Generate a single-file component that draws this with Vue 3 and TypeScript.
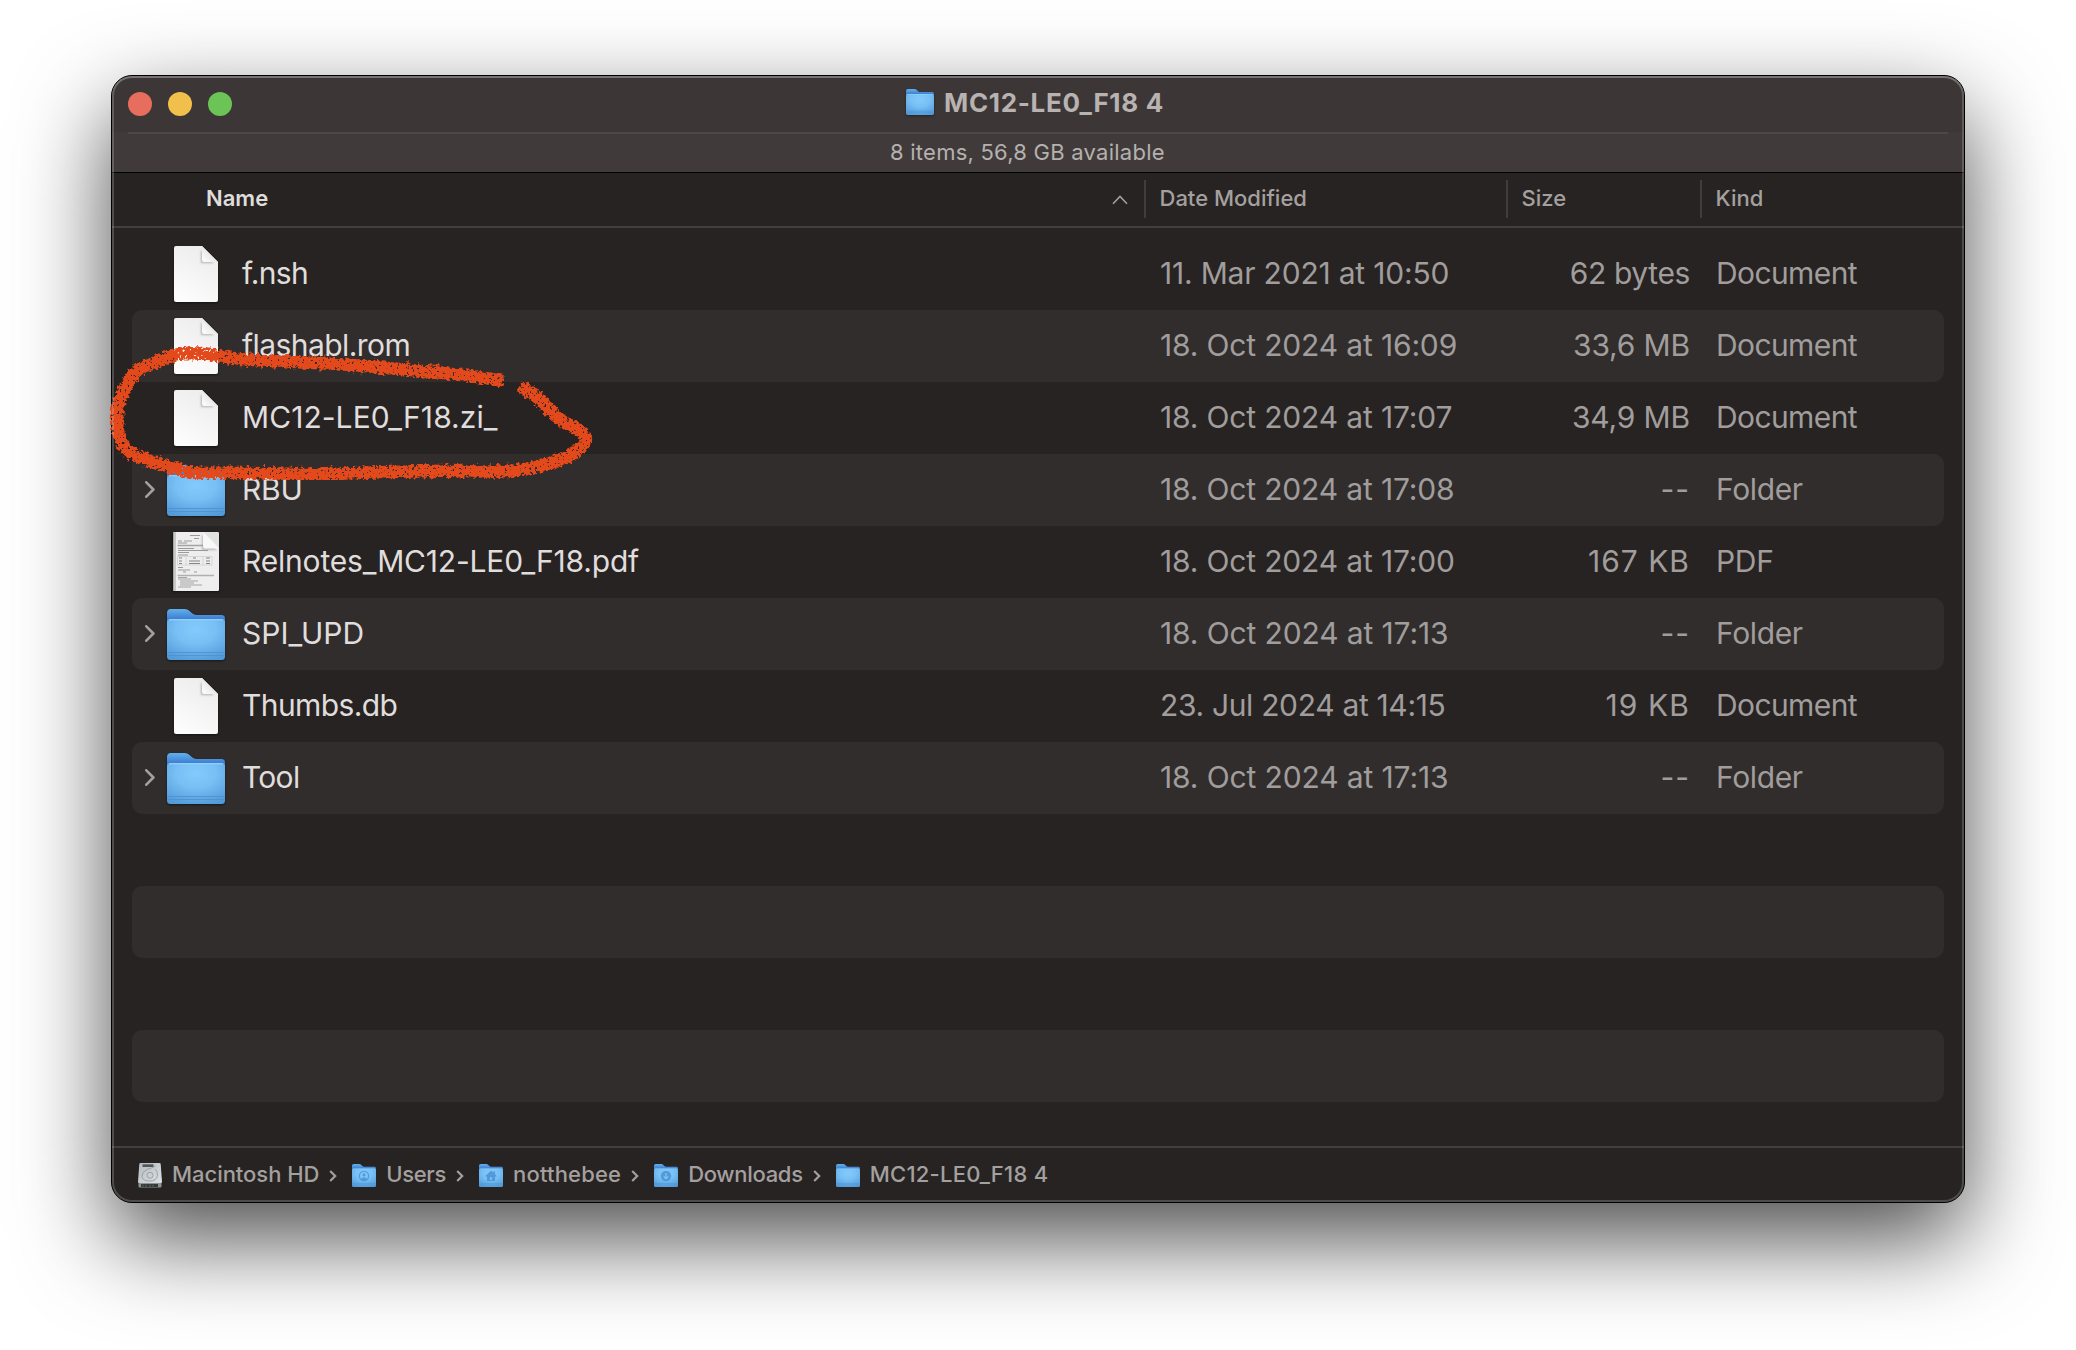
<script setup lang="ts">
type FileKind = 'doc' | 'pdf' | 'folder'

interface Cell {
  text: string
  tracking: number
}

interface FileRow {
  icon: FileKind
  name: Cell
  date: Cell
  size: Cell
  kind: Cell
}

interface Crumb {
  icon: 'disk' | 'folder'
  badge?: 'user' | 'home' | 'download'
  label: Cell
}

const cell = (text: string, tracking: number): Cell => ({ text, tracking })

const documentKind = cell('Document', -0.6)
const folderKind = cell('Folder', -0.36)
const noSize = cell('--', 1)

const files: FileRow[] = [
  { icon: 'doc', name: cell('f.nsh', -0.65), date: cell('11. Mar 2021 at 10:50', -0.2), size: cell('62 bytes', -0.38), kind: documentKind },
  { icon: 'doc', name: cell('flashabl.rom', -0.56), date: cell('18. Oct 2024 at 16:09', -0.16), size: cell('33,6 MB', -0.15), kind: documentKind },
  { icon: 'doc', name: cell('MC12-LE0_F18.zi_', 0.06), date: cell('18. Oct 2024 at 17:07', -0.16), size: cell('34,9 MB', -0.15), kind: documentKind },
  { icon: 'folder', name: cell('RBU', -0.2), date: cell('18. Oct 2024 at 17:08', -0.16), size: noSize, kind: folderKind },
  { icon: 'pdf', name: cell('Relnotes_MC12-LE0_F18.pdf', -0.19), date: cell('18. Oct 2024 at 17:00', -0.16), size: cell('167 KB', 1), kind: cell('PDF', -0.3) },
  { icon: 'folder', name: cell('SPI_UPD', 0), date: cell('18. Oct 2024 at 17:13', -0.12), size: noSize, kind: folderKind },
  { icon: 'doc', name: cell('Thumbs.db', -0.6), date: cell('23. Jul 2024 at 14:15', -0.33), size: cell('19 KB', 1.1), kind: documentKind },
  { icon: 'folder', name: cell('Tool', -0.7), date: cell('18. Oct 2024 at 17:13', -0.12), size: noSize, kind: folderKind },
]

const emptyRows = 4

const crumbs: Crumb[] = [
  { icon: 'disk', label: cell('Macintosh HD', -0.04) },
  { icon: 'folder', badge: 'user', label: cell('Users', -0.35) },
  { icon: 'folder', badge: 'home', label: cell('notthebee', 0.18) },
  { icon: 'folder', badge: 'download', label: cell('Downloads', -0.3) },
  { icon: 'folder', label: cell('MC12-LE0_F18 4', 0.25) },
]

const track = (c: Cell) => ({ letterSpacing: `${c.tracking}px` })
</script>

<template>
  <div class="desktop">
    <svg class="defs" width="0" height="0" aria-hidden="true">
      <defs>
        <linearGradient id="folder-back" x1="0" y1="0" x2="0" y2="1">
          <stop offset="0" stop-color="#62b0ea" />
          <stop offset="0.4" stop-color="#3f80d2" />
          <stop offset="1" stop-color="#3f80d2" />
        </linearGradient>
        <radialGradient id="folder-front" cx="0.5" cy="0.25" r="0.85">
          <stop offset="0" stop-color="#84cafb" />
          <stop offset="0.4" stop-color="#78c0f5" />
          <stop offset="0.95" stop-color="#529bd9" />
        </radialGradient>
        <linearGradient id="doc-body" x1="0.2" y1="1" x2="0.7" y2="0">
          <stop offset="0" stop-color="#fdfdfd" />
          <stop offset="1" stop-color="#ececec" />
        </linearGradient>
        <linearGradient id="doc-fold" x1="0" y1="1" x2="0.6" y2="0.4">
          <stop offset="0" stop-color="#ffffff" />
          <stop offset="1" stop-color="#e4e4e4" />
        </linearGradient>
        <linearGradient id="disk-top" x1="0" y1="0" x2="1" y2="1">
          <stop offset="0" stop-color="#b3babe" />
          <stop offset="1" stop-color="#dce1e4" />
        </linearGradient>
        <filter id="soft" x="-50%" y="-50%" width="200%" height="200%">
          <feGaussianBlur stdDeviation="1.3" />
        </filter>
        <filter id="crayon" filterUnits="userSpaceOnUse" x="0" y="0" width="520" height="160">
          <feTurbulence type="fractalNoise" baseFrequency="0.3" numOctaves="2" seed="7" result="noise" />
          <feDisplacementMap in="SourceGraphic" in2="noise" scale="8" xChannelSelector="R" yChannelSelector="G" result="rough" />
          <feTurbulence type="fractalNoise" baseFrequency="0.4" numOctaves="2" seed="3" result="grain" />
          <feColorMatrix in="grain" type="matrix" values="0 0 0 0 0  0 0 0 0 0  0 0 0 0 0  0 0 0 -14 10.2" result="holes" />
          <feComposite in="rough" in2="holes" operator="in" />
        </filter>
      </defs>
      <symbol id="folder" viewBox="0 0 58 51" preserveAspectRatio="none">
        <path d="M0 4Q0 0 4 0H17.5Q20.5 0 22.5 2L25 4.3Q27 6 29.500 6H54.500Q58 6 58 9.500V24H0Z" fill="url(#folder-back)" />
        <rect x="0" y="10" width="58" height="41" rx="3.500" fill="url(#folder-front)" />
        <path d="M2 10.800H56" stroke="#9bd8ff" stroke-width="1" />
        <path d="M0.500 43.500H57.500M0.500 46.500H57.500" stroke="#4a8fcf" stroke-width="1.200" opacity="0.75" />
      </symbol>
      <symbol id="doc" viewBox="0 0 44 56">
        <path d="M2 0H28L44 16V54Q44 56 42 56H2Q0 56 0 54V2Q0 0 2 0Z" fill="url(#doc-body)" />
        <path d="M27 4V17H40Z" fill="#8a8a8a" opacity="0.6" filter="url(#soft)" />
        <path d="M28 0V14Q28 16 30 16H44Z" fill="url(#doc-fold)" />
      </symbol>
      <symbol id="pdf" viewBox="0 0 47 59">
        <path d="M0 1H2V59H0Z" fill="#1a1818" />
        <path d="M1.500 0H45.500Q47 0 47 1.500V57.500Q47 59 45.500 59H1.500Z" fill="#eeeeee" />
        <path d="M1.500 0H4V59H1.500Z" fill="#c9c9c9" />
        <g stroke="#858585" fill="none">
          <path d="M18 3.500H28M22 6.500H27M6 9H10M12 9H20M6 11H15" stroke-width="0.800" />
          <path d="M5.500 13.500H42" stroke="#a4a4a4" stroke-width="1.600" />
          <path d="M6 16.500H22M6 18.500H36M6 20.500H17M6 23H16" stroke-width="0.800" />
          <path d="M7 26H10M21 26H24M34 26H38M7 29H10M17 29H28M34 29H38M7 31.500H10M17 31.500H28M34 31.500H38" stroke-width="1" />
          <path d="M5.500 24.500H40V33H5.500ZM14 24.500V33M31 24.500V33" stroke="#c8c8c8" stroke-width="0.600" />
          <path d="M6 35.500H11M6 38H18M11 40H14M22 40H25" stroke-width="0.800" />
          <path d="M5.500 43.500H42" stroke="#b0b0b0" stroke-width="1.500" />
          <path d="M6 45.500H15M6 47H19M8 49H26M8 51H22M8 53H30M6 55H19" stroke-width="0.700" />
        </g>
        <path d="M30 2V18H45Z" fill="#8d8d8d" opacity="0.55" filter="url(#soft)" />
        <path d="M31 0V14Q31 16.500 33 16.500H47Z" fill="#f8f8f8" />
        <path d="M31 0H45.500Q47 0 47 1.500V16.500Q39 6 31 0Z" fill="#e2e2e2" />
      </symbol>
      <symbol id="disk" viewBox="0 0 24 25">
        <path d="M0.500 19.500H23.500V23.300Q23.500 24.500 22.300 24.500H1.700Q0.500 24.500 0.500 23.300Z" fill="#8c9192" />
        <path d="M3 21H20V24H3Z" fill="#333838" />
        <path d="M5 21.500V24M8 21.500V24M12 21.500V24M15 21.500V24" stroke="#6a7071" stroke-width="0.700" />
        <path d="M2.600 0H21.400Q22.600 0 22.700 1L24 18.800Q24 20 22.800 20H1.200Q0 20 0 18.800L1.300 1Q1.500 0 2.600 0Z" fill="url(#disk-top)" />
        <path d="M4.500 1.300H15.500V4H4.500Z" fill="#50585c" />
        <path d="M17.500 3Q14 5 9 6.500Q3.500 9 4 13.500Q5 18 11 18Q19 18.500 19.500 12Q19.500 7.500 17 6" fill="none" stroke="#8f979b" stroke-width="0.800" />
        <circle cx="12" cy="12.300" r="3" fill="#c9d0d3" stroke="#8f979b" stroke-width="0.800" />
      </symbol>
    </svg>

    <main class="window">
      <header class="titlebar">
        <div class="lights">
          <span class="light close"></span>
          <span class="light minimise"></span>
          <span class="light zoom"></span>
        </div>
        <svg class="title-icon"><use href="#folder" /></svg>
        <h1 class="title">MC12-LE0_F18 4</h1>
      </header>
      <div class="statusbar"><span>8 items, 56,8 GB available</span></div>

      <div class="columns">
        <div class="col col-name">
          <span>Name</span>
          <svg class="caret" width="16" height="10" viewBox="0 0 16 10">
            <path d="M1 8.800L8 1.500L15 8.800" fill="none" stroke="#a3a09f" stroke-width="1.600" />
          </svg>
        </div>
        <div class="col col-date"><span>Date Modified</span></div>
        <div class="col col-size"><span>Size</span></div>
        <div class="col col-kind"><span>Kind</span></div>
      </div>

      <section class="list">
        <div v-for="file in files" :key="file.name.text" class="row">
          <div class="lead">
            <svg v-if="file.icon === 'folder'" class="disclosure" viewBox="0 0 10 17">
              <path d="M1.300 1.300L8.400 8.500L1.300 15.700" />
            </svg>
            <svg :class="['file-icon', file.icon]"><use :href="`#${file.icon}`" /></svg>
          </div>
          <span class="name" :style="track(file.name)">{{ file.name.text }}</span>
          <span class="meta" :style="track(file.date)">{{ file.date.text }}</span>
          <span class="meta size" :style="track(file.size)">{{ file.size.text }}</span>
          <span class="meta kind" :style="track(file.kind)">{{ file.kind.text }}</span>
        </div>
        <div v-for="n in emptyRows" :key="`empty-${n}`" class="row"></div>
      </section>

      <footer class="pathbar">
        <div v-for="(crumb, i) in crumbs" :key="crumb.label.text" class="crumb">
          <span class="crumb-icon">
            <svg :class="['crumb-glyph', crumb.icon]"><use :href="`#${crumb.icon}`" /></svg>
            <svg v-if="crumb.badge" class="badge" viewBox="0 0 12 12">
              <template v-if="crumb.badge === 'user'">
                <circle cx="6" cy="6" r="4.600" fill="none" stroke="#4790d2" stroke-width="1.300" />
                <circle cx="6" cy="4.800" r="1.600" fill="#4790d2" />
                <path d="M2.800 9Q6 5.500 9.200 9Q6 11.500 2.800 9Z" fill="#4790d2" />
              </template>
              <path
                v-else-if="crumb.badge === 'home'"
                fill-rule="evenodd"
                d="M6 0.500L8.500 2.800V1.300H10V4.200L11.700 6L10.800 7L10 6.300V11H2V6.300L1.200 7L0.300 6ZM4.900 10V7.200H7.100V10Z"
                fill="#4790d2"
              />
              <template v-else>
                <circle cx="6" cy="6" r="5.200" fill="#4790d2" />
                <path d="M6 3V8.500M3.800 6.500L6 8.700L8.200 6.500" fill="none" stroke="#84c7f8" stroke-width="1.100" />
              </template>
            </svg>
          </span>
          <span class="crumb-label" :style="track(crumb.label)">{{ crumb.label.text }}</span>
          <svg v-if="i < crumbs.length - 1" class="crumb-sep" viewBox="0 0 8 12">
            <path d="M1.200 1L6.200 6L1.200 11" />
          </svg>
        </div>
      </footer>

      <svg class="scribble" viewBox="0 0 520 160">
        <g filter="url(#crayon)" fill="none" stroke="#e4491b" stroke-width="12.500" stroke-linejoin="round">
          <path
            d="M403 61C380 57 355 54 333 52C300 49 270 46 233 44C200 42 165 41 140 39C125 37 110 34 87 33C72 33 66 40 52 44C38 47 33 54 28 63C22 74 17 82 17 100C17 112 20 122 26 129C34 137 48 140 60 144C75 149 85 152 100 153C150 152 200 155 233 154C270 153 300 151 333 151C365 150 400 154 425 149C445 145 462 141 474 133C482 127 486 123 486 119C486 112 475 109 465 103C455 96 447 87 438 78C430 71 426 70 420 67"
          />
        </g>
      </svg>
    </main>
  </div>
</template>

<style>
body {
  background: #ffffff;
}
</style>

<style scoped>
.desktop {
  box-sizing: border-box;
  width: 2076px;
  height: 1350px;
  padding: 75px 111px 0;
  overflow: hidden;
  background: #ffffff;
  font-family: Inter, 'Liberation Sans', sans-serif;
}

.defs {
  position: absolute;
}

.window {
  position: relative;
  box-sizing: border-box;
  width: 1854px;
  height: 1128px;
  display: flex;
  flex-direction: column;
  border: 1px solid #000000;
  border-radius: 21px;
  background: #272322;
  box-shadow: 0 36px 92px rgba(0, 0, 0, 0.7);
}

/* light rim just inside the black outline */
.window::after {
  content: '';
  position: absolute;
  inset: 0;
  border-radius: 20px;
  box-shadow: inset 0 0 0 2px rgba(255, 255, 255, 0.19), inset 0 2px 0 rgba(255, 255, 255, 0.14);
  pointer-events: none;
}

.titlebar {
  position: relative;
  box-sizing: border-box;
  height: 56px;
  flex: none;
  display: flex;
  align-items: center;
  padding-left: 16px;
  border-radius: 20px 20px 0 0;
  background: #3c3736;
}

.lights {
  display: flex;
  gap: 16px;
}

.light {
  width: 24px;
  height: 24px;
  border-radius: 50%;
}

.close {
  background: #e76e5d;
}

.minimise {
  background: #f1bf4c;
}

.zoom {
  background: #6bc455;
}

.title-icon {
  width: 28px;
  height: 26px;
  margin: 0 0 4px 674px;
  filter: drop-shadow(0 1px 1px rgba(0, 0, 0, 0.35));
}

.title {
  margin: 0 0 3px 10px;
  color: #b8b3b1;
  font-size: 26px;
  font-weight: 700;
  line-height: 32px;
  letter-spacing: 0.68px;
}

.statusbar {
  flex: none;
  height: 38px;
  padding: 2px 0 0 778px;
  border-bottom: 1px solid #000000;
  background: linear-gradient(#4c4846, #4c4846) 16px 0 / 1820px 2px no-repeat #403b3a;
  color: #b5b1af;
  font-size: 22px;
  line-height: 36px;
  letter-spacing: 0.24px;
}

.columns {
  flex: none;
  display: flex;
  height: 53px;
  border-bottom: 2px solid #423e3d;
  color: #a3a09f;
  font-size: 22px;
  font-weight: 500;
  line-height: 50px;
}

.col {
  display: flex;
  box-sizing: border-box;
}

.col + .col {
  padding-left: 15.5px;
  background: linear-gradient(#413d3c, #413d3c) 0 7px / 2px 38px no-repeat;
}

.col-name {
  width: 1032px;
  padding: 0 16px 0 94px;
  justify-content: space-between;
  color: #dfdddc;
  font-weight: 600;
}

.caret {
  margin-top: 22px;
}

.col-date {
  width: 362px;
}

.col-size {
  width: 194px;
}

.list {
  flex: 1;
  padding: 10px 20px 0 20px;
  overflow: hidden;
}

.row {
  display: grid;
  grid-template-columns: 110px 918px 362px 168px 1fr;
  height: 72px;
  border-radius: 10px;
  line-height: 71px;
  font-size: 30px;
  font-weight: 440;
  white-space: nowrap;
}

.row:nth-child(even) {
  background: #312d2c;
}

.lead {
  display: flex;
  justify-content: flex-end;
}

.disclosure {
  width: 10px;
  height: 17px;
  margin: 27px auto 0 13px;
  fill: none;
  stroke: #a3a09f;
  stroke-width: 2.6px;
  stroke-linecap: round;
  stroke-linejoin: round;
}

.file-icon {
  flex: none;
  filter: drop-shadow(0 1px 1px rgba(0, 0, 0, 0.5));
}

.file-icon.folder {
  width: 58px;
  height: 51px;
  margin: 11px 17px 0 0;
}

.file-icon.doc {
  width: 44px;
  height: 56px;
  margin: 8px 24px 0 0;
}

.file-icon.pdf {
  width: 47px;
  height: 59px;
  margin: 6px 23px 0 0;
}

.name {
  color: #e0dedd;
}

.meta {
  color: #a09d9c;
}

.size {
  text-align: right;
}

.kind {
  padding-left: 26px;
}

.pathbar {
  position: relative;
  flex: none;
  display: flex;
  align-items: center;
  height: 54px;
  padding: 0 0 0 26px;
  border-top: 2px solid #423e3d;
  color: #a3a09f;
  font-size: 22px;
  font-weight: 500;
}

.crumb {
  display: flex;
  align-items: center;
}

.crumb-icon {
  position: relative;
  display: flex;
  width: 24px;
  height: 25px;
  margin-right: 10px;
}

.crumb-glyph {
  width: 24px;
  height: 25px;
}

.crumb-glyph.folder {
  height: 23px;
  margin-top: 1px;
}

.badge {
  position: absolute;
  left: 6px;
  top: 7px;
  width: 12px;
  height: 12px;
  opacity: 0.8;
}

.crumb-label {
  line-height: 32px;
  margin-top: -3px;
}

.crumb-sep {
  width: 8px;
  height: 12px;
  margin: 1px 15px 0 10px;
  fill: none;
  stroke: #a3a09f;
  stroke-width: 2.2px;
}

/* hand-drawn ring around the firmware archive */
.scribble {
  position: absolute;
  left: -12px;
  top: 244px;
  width: 520px;
  height: 160px;
  overflow: visible;
}
</style>
